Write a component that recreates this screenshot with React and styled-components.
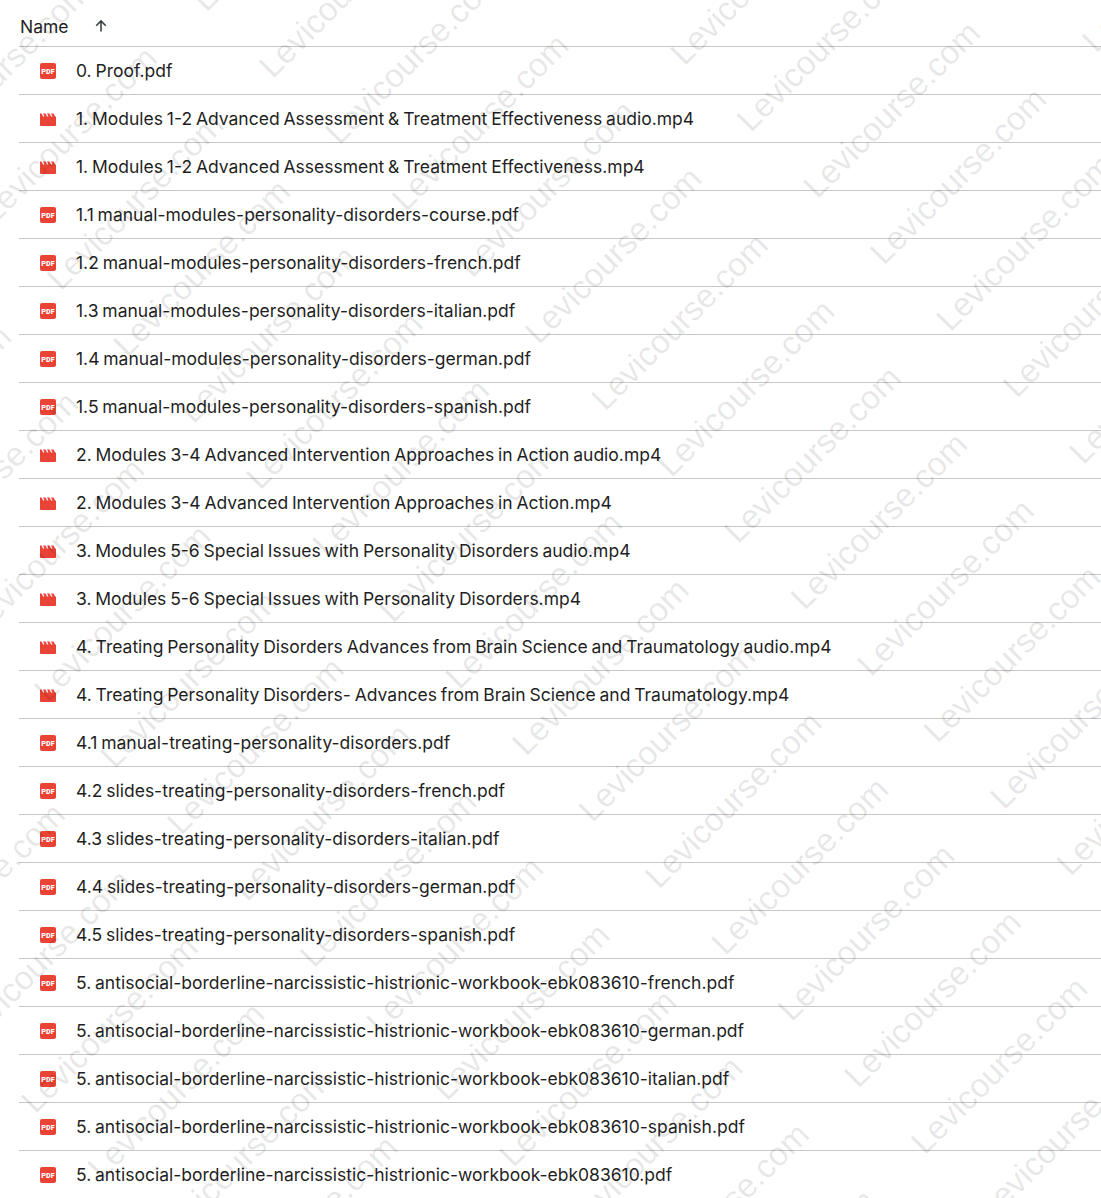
import React from 'react'
import styled, { createGlobalStyle } from 'styled-components'

const GlobalStyle = createGlobalStyle`
    html, body {
        margin: 0;
        background: #fff;
    }
    body {
        font-family: "Inter", "Roboto", "Liberation Sans", sans-serif;
        overflow: hidden;
    }
`

const files = [
    ['pdf', '0. Proof.pdf'],
    ['video', '1. Modules 1-2 Advanced Assessment & Treatment Effectiveness audio.mp4'],
    ['video', '1. Modules 1-2 Advanced Assessment & Treatment Effectiveness.mp4'],
    ['pdf', '1.1 manual-modules-personality-disorders-course.pdf'],
    ['pdf', '1.2 manual-modules-personality-disorders-french.pdf'],
    ['pdf', '1.3 manual-modules-personality-disorders-italian.pdf'],
    ['pdf', '1.4 manual-modules-personality-disorders-german.pdf'],
    ['pdf', '1.5 manual-modules-personality-disorders-spanish.pdf'],
    ['video', '2. Modules 3-4 Advanced Intervention Approaches in Action audio.mp4'],
    ['video', '2. Modules 3-4 Advanced Intervention Approaches in Action.mp4'],
    ['video', '3. Modules 5-6 Special Issues with Personality Disorders audio.mp4'],
    ['video', '3. Modules 5-6 Special Issues with Personality Disorders.mp4'],
    ['video', '4. Treating Personality Disorders Advances from Brain Science and Traumatology audio.mp4'],
    ['video', '4. Treating Personality Disorders- Advances from Brain Science and Traumatology.mp4'],
    ['pdf', '4.1 manual-treating-personality-disorders.pdf'],
    ['pdf', '4.2 slides-treating-personality-disorders-french.pdf'],
    ['pdf', '4.3 slides-treating-personality-disorders-italian.pdf'],
    ['pdf', '4.4 slides-treating-personality-disorders-german.pdf'],
    ['pdf', '4.5 slides-treating-personality-disorders-spanish.pdf'],
    ['pdf', '5. antisocial-borderline-narcissistic-histrionic-workbook-ebk083610-french.pdf'],
    ['pdf', '5. antisocial-borderline-narcissistic-histrionic-workbook-ebk083610-german.pdf'],
    ['pdf', '5. antisocial-borderline-narcissistic-histrionic-workbook-ebk083610-italian.pdf'],
    ['pdf', '5. antisocial-borderline-narcissistic-histrionic-workbook-ebk083610-spanish.pdf'],
    ['pdf', '5. antisocial-borderline-narcissistic-histrionic-workbook-ebk083610.pdf'],
]

const PdfIcon = () => (
    <svg width="16" height="16" viewBox="0 0 16 16">
        <rect width="16" height="16" rx="2" fill="#ea4335" />
        <text x="8" y="10.8" textAnchor="middle" fontSize="7.2" fontWeight="900" fill="#fff" fontFamily="Roboto, sans-serif">PDF</text>
    </svg>
)

const VideoIcon = () => (
    <svg width="16" height="16" viewBox="0 0 16 16">
        <path fill="#ea4335" d="M0 2.5 L1.5 2.5 L3 5.5 L4.5 5.5 L3 2.5 L5.5 2.5 L7 5.5 L8.5 5.5 L7 2.5 L9.5 2.5 L11 5.5 L12.5 5.5 L11 2.5 L13.5 2.5 L15 5.5 L16 5.5 L16 14 Q16 15 15 15 L1 15 Q0 15 0 14 Z" />
    </svg>
)

const rows = Array.from({ length: 18 })
const cols = Array.from({ length: 8 })

export default function App() {
    return (
        <>
            <GlobalStyle />
            <Page>
                <HeaderRow>
                    <HeaderName>Name</HeaderName>
                    <SortArrow width="16" height="16" viewBox="0 0 16 16">
                        <path d="M8 13.5V3M3.2 7.8 8 3l4.8 4.8" fill="none" stroke="#3c4043" strokeWidth="1.6" />
                    </SortArrow>
                </HeaderRow>
                {files.map(([kind, name]) => (
                    <FileRow key={name}>
                        <IconSlot>{kind === 'pdf' ? <PdfIcon /> : <VideoIcon />}</IconSlot>
                        <FileName>{name}</FileName>
                    </FileRow>
                ))}
                <WatermarkLayer>
                    {rows.map((_, r) => (
                        <WatermarkRow key={r}>
                            {cols.map((_, c) => <WatermarkText key={c}>Levicourse.com</WatermarkText>)}
                        </WatermarkRow>
                    ))}
                </WatermarkLayer>
            </Page>
        </>
    )
}

const Page = styled.div`
    position: relative;
    width: 1101px;
    height: 1198px;
    overflow: hidden;
    background: #fff;
    padding-left: 19px;
    box-sizing: border-box;
`

const HeaderRow = styled.div`
    display: flex;
    align-items: center;
    height: 47px;
    box-sizing: border-box;
    padding: 6px 0 0 1px;
    border-bottom: 1px solid #c7c7c7;
`

const HeaderName = styled.span`
    font-size: 17.5px;
    color: #1f1f1f;
`

const SortArrow = styled.svg`
    margin-left: 24px;
    margin-bottom: 1px;
`

const FileRow = styled.div`
    display: flex;
    align-items: center;
    height: 48px;
    box-sizing: border-box;
    border-bottom: 1px solid #c7c7c7;
`

const IconSlot = styled.span`
    display: flex;
    width: 16px;
    margin-left: 21px;
`

const FileName = styled.span`
    margin-left: 20px;
    font-size: 17.5px;
    word-spacing: -1.1px;
    color: #1f1f1f;
    white-space: nowrap;
`

const WatermarkLayer = styled.div`
    position: absolute;
    left: 550px;
    top: 600px;
    width: 2424px;
    height: 1688px;
    margin: -844px 0 0 -1212px;
    padding: 34px 0 0 184px;
    box-sizing: border-box;
    transform: rotate(-45deg);
    pointer-events: none;
`

const WatermarkRow = styled.div`
    display: flex;
    height: 94px;
    align-items: center;
`

const WatermarkText = styled.span`
    flex: 0 0 300px;
    font-size: 33.3px;
    font-family: "Liberation Sans", Arial, sans-serif;
    color: rgba(0, 0, 0, 0.1);
    white-space: nowrap;
`
